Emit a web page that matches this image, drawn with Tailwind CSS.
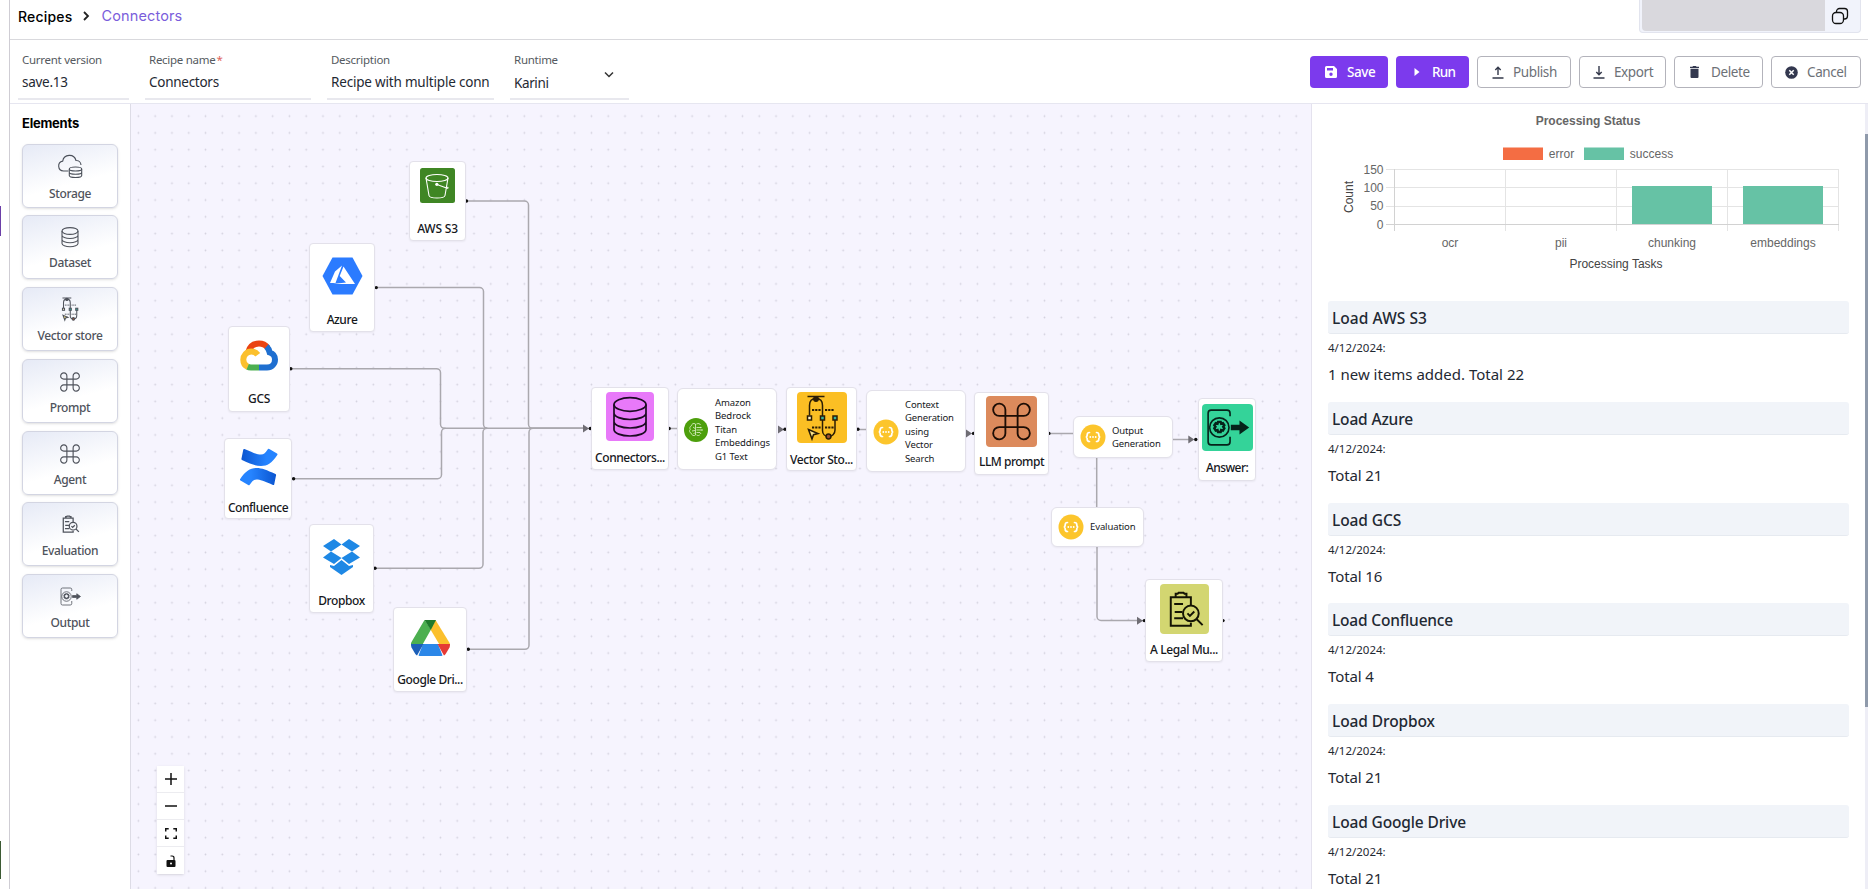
<!DOCTYPE html>
<html lang="en">
<head>
<meta charset="utf-8">
<title>Recipes - Connectors</title>
<script src="https://cdn.jsdelivr.net/npm/@tailwindcss/browser@4"></script>
</head>
<body class="h-[889px] w-[1868px] overflow-hidden bg-white font-['Noto_Sans','Open_Sans',sans-serif] text-[#1f2933]">

<!-- Shared icons -->
<svg class="hidden">
  <symbol id="i-db" viewBox="0 0 48 48" fill="none" stroke="currentColor">
    <ellipse cx="24" cy="12" rx="16" ry="6.800"/><path d="M8 12v25c0 3.700 7.200 6.500 16 6.500s16-2.800 16-6.500V12M8 20.500c0 3.700 7.200 6.500 16 6.500s16-2.800 16-6.500M8 29c0 3.700 7.200 6.500 16 6.500s16-2.800 16-6.500"/>
  </symbol>
  <symbol id="i-cmd" viewBox="0 0 50 50" fill="none" stroke="currentColor">
    <path d="M19 14v22a6 6 0 1 1-6-5.500h24a6 6 0 1 1-6 5.500V14a6 6 0 1 1 6 5.500H13A6 6 0 1 1 19 14z"/>
  </symbol>
  <symbol id="i-vec" viewBox="0 0 50 50" fill="none" stroke="currentColor">
    <path d="M10.500 4h17M12.500 23v-10c0-5 2.500-7 6.500-7s6.500 2.500 6.500 7v25c0 3.500 2.500 6 6 6s6.500-2.500 6.500-6.500V27"/>
    <path d="M15 17.500h9M28 17.500h9M15 35h9M28 35h9" stroke-dasharray="2.200 1" stroke-width="1.800"/>
    <circle cx="19" cy="6.500" r="2.200" fill="currentColor"/><circle cx="31.500" cy="44" r="2.400" fill="#a0522d"/>
    <rect x="10.500" y="23.500" width="4" height="4" fill="#fef3c7"/><rect x="23.500" y="23.500" width="4" height="4" fill="#34b3a0"/><rect x="36" y="23.500" width="4" height="4" fill="#34b3a0"/>
    <path d="M11.500 37l9.500 4-4.500 1.200-1.500 4.300z" fill="#fde68a"/>
  </symbol>
  <symbol id="i-eval" viewBox="0 0 50 50" fill="none" stroke="currentColor">
    <path d="M31.500 21v-8H11v29h20.500v-3M16 12.500V9.500h2l1-1h5l1 1h2v3M14.500 20h9M15 28h8M14.500 34.500h9"/>
    <circle cx="31.500" cy="29.500" r="8"/><path d="M28 29.500l2.500 2.500 4.500-4.500M37.500 35.500l6 6"/>
  </symbol>
  <symbol id="i-out" viewBox="0 0 50 46" fill="none" stroke="currentColor">
    <path d="M27.500 12V9a3 3 0 0 0-3-3H9a3 3 0 0 0-3 3v28a3 3 0 0 0 3 3h15.500a3 3 0 0 0 3-3v-5"/>
    <circle cx="17" cy="23" r="9.500"/>
    <path d="M15.700 17.500h2.600l.5 1.700 1.700-.5 1.400 2.100-1.100 1.500 1.100 1.500-1.400 2.200-1.700-.5-.5 1.900h-2.600l-.5-1.900-1.700.5-1.400-2.200 1.100-1.500-1.100-1.500 1.400-2.100 1.700.5z" stroke-width="2.400"/>
    <path d="M29 21h8.500v-3.500l7.500 5.500-7.500 5.500V25H29z" fill="currentColor" stroke-width="1.500"/>
  </symbol>
  <symbol id="i-fn" viewBox="0 0 26 26">
    <circle cx="13" cy="13" r="12.500" fill="#fcc52c"/>
    <g fill="none" stroke="#fff" stroke-width="1.700" stroke-linecap="round"><path d="M9.500 8.500c-2 0-2.300 1-2.300 2.300 0 1.200-.5 2.200-1.500 2.200 1 0 1.500 1 1.500 2.200 0 1.300.3 2.300 2.300 2.300M16.500 8.500c2 0 2.300 1 2.300 2.300 0 1.200.5 2.200 1.500 2.200-1 0-1.500 1-1.500 2.200 0 1.300-.3 2.300-2.300 2.300"/></g>
    <g fill="#fff"><circle cx="10.300" cy="13" r=".9"/><circle cx="13" cy="13" r=".9"/><circle cx="15.700" cy="13" r=".9"/></g>
  </symbol>
</svg>

<div class="flex h-full">
  <!-- Collapsed navigation edge -->
  <div class="flex w-[9px] shrink-0 flex-col">
    <div class="mt-[206px] h-[30px] w-px bg-[#6b3fa8]"></div>
    <div class="mt-[605px] h-[38px] w-px bg-[#3c5a34]"></div>
  </div>

  <div class="flex h-full grow flex-col border-l border-[#cfcdd4]">
    <!-- Breadcrumb -->
    <header class="flex h-10 shrink-0 items-start justify-between border-b border-[#d9d9dd] pl-2 pr-[7px]">
      <nav class="flex h-8 items-center font-['Inter',sans-serif] text-[14.500px]">
        <span class="text-[14px] font-medium tracking-[0.190px] text-black">Recipes</span>
        <svg class="ml-[10px] h-3 w-2" viewBox="0 0 8 12" fill="none" stroke="#222" stroke-width="1.800"><path d="M2 2l4 4-4 4"/></svg>
        <span class="ml-[11px] tracking-[0.130px] text-[#7a5ddb]">Connectors</span>
      </nav>
      <div class="flex h-[33px] w-[222px] rounded-b border border-t-0 border-[#e2e4ee] bg-[#f1f3fb] pb-px pl-[2px]">
        <div class="w-[183px] rounded-bl bg-[#d9d8dd]"></div>
        <svg class="ml-[6px] mt-[7px] h-[18px] w-[18px]" viewBox="0 0 18 18" fill="none" stroke="#111" stroke-width="1.300"><rect x="1.500" y="5.500" width="11" height="11" rx="3.500"/><path d="M5.500 5V4.500a3 3 0 0 1 3-3h5a3 3 0 0 1 3 3v4.500a3 3 0 0 1-3 3h-.5"/></svg>
      </div>
    </header>

    <!-- Recipe toolbar -->
    <div class="flex h-16 shrink-0 justify-between border-b border-[#e6e6f0] pl-2 pr-[7px]">
      <div class="flex gap-4 pt-[11px] text-[13.500px] tracking-[-0.270px]">
        <label class="flex h-[49px] w-[111px] flex-col border-b-2 border-[#e8e8ee] pl-1"><span class="h-[18px] text-[11.500px] leading-[18px] text-[#555a60]">Current version</span><span class="mt-[3px] leading-[20px]">save.13</span></label>
        <label class="flex h-[49px] w-[166px] flex-col border-b-2 border-[#e8e8ee] pl-1"><span class="h-[18px] text-[11.500px] leading-[18px] text-[#555a60]">Recipe name<span class="ml-px text-[#e0645c]">*</span></span><span class="mt-[3px] leading-[20px]">Connectors</span></label>
        <label class="flex h-[49px] w-[167px] flex-col border-b-2 border-[#e8e8ee] pl-1"><span class="h-[18px] text-[11.500px] leading-[18px] text-[#555a60]">Description</span><span class="mt-[3px] whitespace-nowrap leading-[20px] tracking-[-0.190px]">Recipe with multiple conn</span></label>
        <label class="flex h-[49px] w-[119px] border-b-2 border-[#e8e8ee] pl-1"><span class="flex grow flex-col"><span class="h-[18px] text-[11.500px] leading-[18px] text-[#555a60]">Runtime</span><span class="mt-1 leading-[20px] tracking-[-0.390px]">Karini</span></span>
          <svg class="mr-[15px] mt-[20px] h-2 w-[10px]" viewBox="0 0 10 8" fill="none" stroke="#333" stroke-width="1.500"><path d="M1 1.500l4 4 4-4"/></svg></label>
      </div>
      <div class="flex gap-2 pt-4 text-[13.500px] tracking-[-0.390px] text-[#6d7177]">
        <button class="flex h-8 w-[78px] items-center rounded bg-[#7c3aed] pl-[15px] font-medium text-white"><svg class="mr-[10px] h-3 w-3" viewBox="0 0 12 12"><path fill="#fff" fill-rule="evenodd" d="M1.500 0H9l3 3v7.500a1.500 1.500 0 0 1-1.500 1.500h-9A1.500 1.500 0 0 1 0 10.500v-9A1.500 1.500 0 0 1 1.500 0zM2 2v2.500h6V2zM6 6.500a1.700 1.700 0 1 0 0 3.400 1.700 1.700 0 0 0 0-3.400z"/></svg>Save</button>
        <button class="flex h-8 w-[73px] items-center rounded bg-[#7c3aed] pl-[17px] font-medium tracking-[-0.700px] text-white"><svg class="mr-[11px] h-[10px] w-2" viewBox="0 0 8 10" fill="#fff"><path d="M1.500 1l5 4-5 4z"/></svg>Run</button>
        <button class="flex h-8 w-[94px] items-center rounded border border-[#b3b3bb] pl-[14px]"><svg class="mr-[9px] h-[13px] w-3" viewBox="0 0 12 13" fill="none" stroke="#33384a" stroke-width="1.400"><path d="M.5 12h11M6 9V1.500M3.300 4L6 1.300 8.700 4"/></svg>Publish</button>
        <button class="flex h-8 w-[87px] items-center rounded border border-[#b3b3bb] pl-[13px]"><svg class="mr-[9px] h-[13px] w-3" viewBox="0 0 12 13" fill="none" stroke="#33384a" stroke-width="1.400"><path d="M.5 12h11M6 0v8.500M3.300 6L6 8.700 8.700 6"/></svg>Export</button>
        <button class="flex h-8 w-[89px] items-center rounded border border-[#b3b3bb] pl-[14px]"><svg class="mr-[11px] h-3 w-[11px]" viewBox="0 0 11 12" fill="#33384f"><path d="M1 .7h2.500L4 0h3l.5.700H10V2H1zM1.500 2.700h8V11a1 1 0 0 1-1 1h-6a1 1 0 0 1-1-1z"/></svg>Delete</button>
        <button class="flex h-8 w-[90px] items-center rounded border border-[#b3b3bb] pl-[13px]"><svg class="mr-[9px] h-[13px] w-[13px]" viewBox="0 0 13 13"><circle cx="6.500" cy="6.500" r="6.300" fill="#33384f"/><path d="M4.300 4.300l4.400 4.400M8.700 4.300L4.300 8.700" stroke="#fff" stroke-width="1.500"/></svg>Cancel</button>
      </div>
    </div>

    <div class="flex min-h-0 grow">
      <!-- Elements palette -->
      <aside class="flex w-[121px] shrink-0 flex-col border-r border-[#dddce6] pl-3 text-[12px] font-medium tracking-[-0.380px] text-[#4f535c]">
        <h2 class="mt-[9px] h-[30.500px] font-['Inter',sans-serif] text-[13px] font-bold leading-5 tracking-[-0.230px] text-black">Elements</h2>
        <div class="flex w-24 flex-col gap-[7.800px]">
          <div class="flex h-16 flex-col items-center rounded-md border border-[#d3d5e2] bg-linear-165 from-[#e6eaf6] to-white to-60% pt-2 shadow"><svg class="h-7 w-7" viewBox="0 0 28 28" fill="none" stroke="#4b505a" stroke-width="1.100"><path d="M12.500 18H7.500a5 5 0 0 1-.800-9.900A6.800 6.800 0 0 1 20 7.500a4.800 4.800 0 0 1 5 4.500"/><ellipse cx="19.500" cy="16" rx="6.200" ry="2"/><path d="M13.300 16v6.500c0 1.200 2.800 2 6.200 2s6.200-.800 6.200-2V16M13.300 19.200c0 1.200 2.800 2 6.200 2s6.200-.800 6.200-2"/></svg><span class="mt-[3px] leading-5">Storage</span></div>
          <div class="flex h-16 flex-col items-center rounded-md border border-[#d3d5e2] bg-linear-165 from-[#e6eaf6] to-white to-60% pt-[9px] shadow"><svg class="h-6 w-6" stroke-width="2.200"><use href="#i-db"/></svg><span class="mt-1 leading-5">Dataset</span></div>
          <div class="flex h-16 flex-col items-center rounded-md border border-[#d3d5e2] bg-linear-165 from-[#e6eaf6] to-white to-60% pt-2 shadow"><svg class="h-[26px] w-[26px]" stroke-width="2"><use href="#i-vec"/></svg><span class="mt-1 leading-5">Vector store</span></div>
          <div class="flex h-16 flex-col items-center rounded-md border border-[#d3d5e2] bg-linear-165 from-[#e6eaf6] to-white to-60% pt-[9px] shadow"><svg class="h-[26px] w-[26px]" stroke-width="2.200"><use href="#i-cmd"/></svg><span class="mt-[3px] leading-5">Prompt</span></div>
          <div class="flex h-16 flex-col items-center rounded-md border border-[#d3d5e2] bg-linear-165 from-[#e6eaf6] to-white to-60% pt-[9px] shadow"><svg class="h-[26px] w-[26px]" stroke-width="2.200"><use href="#i-cmd"/></svg><span class="mt-[3px] leading-5">Agent</span></div>
          <div class="flex h-16 flex-col items-center rounded-md border border-[#d3d5e2] bg-linear-165 from-[#e6eaf6] to-white to-60% pt-[9px] shadow"><svg class="h-6 w-6" stroke-width="2.600"><use href="#i-eval"/></svg><span class="mt-[5px] leading-5">Evaluation</span></div>
          <div class="flex h-16 flex-col items-center rounded-md border border-[#d3d5e2] bg-linear-165 from-[#e6eaf6] to-white to-60% pt-[9px] shadow"><svg class="h-[25px] w-[25px]" stroke-width="1.600"><use href="#i-out"/></svg><span class="mt-1 leading-5">Output</span></div>
        </div>
      </aside>

      <!-- Flow canvas: layer origin is the page's top-left corner -->
      <main class="relative w-[1180px] shrink-0 overflow-hidden bg-[#f6f4fe] text-[12px] font-medium tracking-[-0.420px] whitespace-nowrap text-[#16181c]">
        <div class="absolute -left-[131px] -top-[104px] h-[889px] w-[1868px]">
          <svg class="absolute inset-0" width="1868" height="889">
            <defs><pattern id="dots" width="16.780" height="16.780" patternUnits="userSpaceOnUse" x="146.800" y="141.300"><circle cx="8.390" cy="8.390" r=".9" fill="#d3d1de"/></pattern></defs>
            <rect width="1868" height="889" fill="url(#dots)"/>
            <g fill="none" stroke="#aaa8ae" stroke-width="1.500">
              <path d="M468 201H524.500a4 4 0 0 1 4 4V424.300a4 4 0 0 0 4 4H583"/>
              <path d="M378 287.500H479.500a4 4 0 0 1 4 4V424.300a4 4 0 0 0 4 4"/>
              <path d="M292 368.700H436.500a4 4 0 0 1 4 4V424.300a4 4 0 0 0 4 4H583"/>
              <path d="M295 478.700H437.500a4 4 0 0 0 4-4V432.300a4 4 0 0 1 4-4"/>
              <path d="M376 568.300H479a4 4 0 0 0 4-4V432.300a4 4 0 0 1 4-4"/>
              <path d="M470 649.300H525a4 4 0 0 0 4-4V432.300a4 4 0 0 1 4-4H583"/>
              <path d="M671 428.500h8M860 429.500h8M1051 433.500h23M1172 439.500h17M1096.700 456v52M1097 545v71.500a4 4 0 0 0 4 4h37"/>
            </g>
            <g fill="#6f6d74"><path d="M583 424.500v8l6-4zM778 425.500v8l6-4zM966 429.500v8l6-4zM1188.300 435.500v8l6-4zM1137 616.700v8l6-4z"/></g>
            <g fill="#111"><circle cx="466.500" cy="201" r="1.700"/><circle cx="376.300" cy="287.600" r="1.700"/><circle cx="290.800" cy="368.700" r="1.700"/><circle cx="293.600" cy="478.700" r="1.700"/><circle cx="375" cy="568.300" r="1.700"/><circle cx="468.300" cy="649.300" r="1.700"/><circle cx="590.300" cy="428.500" r="1.700"/><circle cx="669.200" cy="428.500" r="1.700"/><circle cx="785" cy="429.300" r="1.700"/><circle cx="858" cy="429.300" r="1.700"/><circle cx="973.500" cy="433.400" r="1.700"/><circle cx="1049" cy="433.400" r="1.700"/><circle cx="1195.800" cy="439.500" r="1.700"/><circle cx="1144.300" cy="620.600" r="1.700"/><circle cx="1223" cy="620.600" r="1.700"/></g>
          </svg>

          <div class="absolute left-[409px] top-[161px] flex h-20 w-[57px] flex-col items-center rounded border border-[#e3e1ea] bg-white pt-[6px] shadow-xs">
            <svg class="h-[35px] w-[35px] shrink-0" viewBox="0 0 35 35"><rect width="35" height="35" rx="2.500" fill="#3f8624"/><g fill="none" stroke="#fff" stroke-width="1.100"><ellipse cx="17" cy="10" rx="11" ry="3.500"/><path d="M6 10l3 17.500c.3 1.400 3.500 2.500 8 2.500s7.700-1.100 8-2.500L28 10M17 16.500l9.500 3.500c1.500.3 2 0 1-1"/></g><circle cx="16.800" cy="16.300" r="1.600" fill="#fff"/></svg>
            <span class="mt-[17px] leading-[18px] tracking-[-0.200px]">AWS S3</span></div>

          <div class="absolute left-[309px] top-[243px] flex h-[89px] w-[66px] flex-col items-center rounded border border-[#e3e1ea] bg-white pt-[13px] shadow-xs">
            <svg class="h-[38px] w-[41px] shrink-0" viewBox="0 0 41 38"><path d="M10.500.5h20L40.500 19l-10 18.500h-20L.5 19z" fill="#2b7bff"/><path d="M20 8.500L13 14.500 8 26h5.500zM21.500 9.500L17.700 19l6.300 6.500-13 1.500H33z" fill="#fff"/></svg>
            <span class="mt-4 leading-[18px]">Azure</span></div>

          <div class="absolute left-[228px] top-[326px] flex h-[86px] w-[62px] flex-col items-center rounded border border-[#e3e1ea] bg-white pt-[13px] shadow-xs">
            <svg class="h-[31px] w-[38px] shrink-0" viewBox="0 0 38 31" fill="none" stroke-width="6"><path d="M8.500 11.500C10 6.500 14 3.500 19 3.500c3.500 0 6.500 1.300 8.500 4" stroke="#ea4312"/><path d="M26.500 6.500c1.800 1.700 2.700 3.700 3.200 6 3.200 1 5.300 3.500 5.300 7 0 4.500-3.300 8-8 8h-8" stroke="#1f6fd0"/><path d="M19 27.500h-8c-1.500 0-2.800-.400-4-1.100" stroke="#4caf50"/><path d="M7.700 26.800C5 25.700 3.300 23 3.300 19.800c0-4.500 3.300-8.300 8-8.300 3 0 5 1.200 6.500 3.200" stroke="#fbc02d"/></svg>
            <span class="mt-[19px] leading-[18px] tracking-[-0.350px]">GCS</span></div>

          <div class="absolute left-[224px] top-[438px] flex h-[81px] w-[68px] flex-col items-center rounded border border-[#e3e1ea] bg-white pt-[9px] shadow-xs">
            <svg class="h-[38px] w-[39px] shrink-0" viewBox="0 0 39 38"><defs><linearGradient id="cf1" x1="0" x2="1"><stop offset="0" stop-color="#0b55d0"/><stop offset=".7" stop-color="#2684ff"/></linearGradient><linearGradient id="cf2" x1="1" x2="0"><stop offset="0" stop-color="#0b55d0"/><stop offset=".7" stop-color="#2684ff"/></linearGradient></defs><path d="M5.500 1c9 4 13 5.500 16.500 5.500 3 0 4.500-2 6.800-5.300.4-.6.900-.7 1.500-.3L38 5.500c.6.400.7.900.3 1.500C33 15 28.500 18 22 18c-5.500 0-10-2-19-6-.6-.3-.8-.8-.5-1.500L4.300 1.500C4.500 1 4.900.8 5.500 1z" fill="url(#cf1)"/><path d="M34 37c-9-4-13-5.500-16.500-5.500-3 0-4.500 2-6.800 5.300-.4.600-.9.700-1.500.3L1.500 32.500c-.6-.400-.7-.900-.3-1.500C6.500 23 11 20 17.500 20c5.500 0 10 2 19 6 .6.300.8.800.5 1.500l-1.800 9c-.2.500-.6.700-1.200.5z" fill="url(#cf2)"/></svg>
            <span class="mt-[13px] leading-[18px] tracking-[-0.460px]">Confluence</span></div>

          <div class="absolute left-[309px] top-[524px] flex h-[89px] w-[65px] flex-col items-center rounded border border-[#e3e1ea] bg-white pt-[14px] shadow-xs">
            <svg class="h-9 w-[37px] shrink-0" viewBox="0 0 37 36" fill="#1e88e5"><path d="M11 0l7.500 5.500L8 12.500 0 7zM26 0l11 7-8 5.500L18.500 5.500zM0 18.500l8-6 10.500 6.500-7.500 6zM29 12.500l8 6-11 6.500-7.500-6zM7 26l4 1 7.500-6 7.500 6 4-1v2l-11.500 8L7 28z"/></svg>
            <span class="mt-[17px] leading-[18px]">Dropbox</span></div>

          <div class="absolute left-[393px] top-[607px] flex h-[85px] w-[74px] flex-col items-center rounded border border-[#e3e1ea] bg-white pt-3 shadow-xs">
            <svg class="h-9 w-[39px] shrink-0" viewBox="0 0 39 36"><path d="M13.500 0L.5 22c-.8 1.300-.6 2.200 0 3.500h10.500L20 9.500z" fill="#4caf50"/><path d="M24.500 0l13.800 22.500c.7 1.200.7 2 .2 3H29L19.500 9.500z" fill="#fbc02d"/><path d="M13.500 0h11.500l-5.200 10z" fill="#1f7a2c"/><path d="M12 24h15l4.500 11.500c-.7.400-1.300.5-2 .5h-20c-.7 0-1.300-.1-2-.5z" fill="#2b87e8"/><path d="M0 24h12.500L6 35.500c-.8-.4-1.300-.9-1.800-1.700L.5 27.500c-.4-.8-.5-2-.5-3.500z" fill="#1c5fb8"/><path d="M26.500 24H39c0 1.500-.1 2.700-.5 3.500l-3.700 6.300c-.5.800-1 1.300-1.800 1.700z" fill="#e53935"/><path d="M19.500 13.500L13 24h13z" fill="#fff"/></svg>
            <span class="mt-[15px] leading-[18px]">Google Dri...</span></div>

          <div class="absolute left-[591px] top-[387px] flex h-[83px] w-[78px] flex-col items-center rounded border border-[#e3e1ea] bg-white pt-1 shadow-xs">
            <div class="h-[49px] w-12 rounded bg-[#e879f9] text-[#1b0b22]"><svg class="h-[49px] w-12" stroke-width="1.700"><use href="#i-db"/></svg></div>
            <span class="mt-[8px] leading-[18px]">Connectors...</span></div>

          <div class="absolute left-[677px] top-[388px] flex h-[82px] w-[100px] items-center rounded-md border border-[#e3e1ea] bg-white pl-[6px] pt-px text-[9.500px] font-normal leading-[13.600px] tracking-[-0.080px] shadow-xs">
            <svg class="mr-[7px] h-6 w-6 shrink-0" viewBox="0 0 24 24"><circle cx="12" cy="12" r="12" fill="#4d9f0c"/><g fill="none" stroke="#e4f5d0" stroke-width=".8"><path d="M11.500 6c-2-1.300-4 0-4 1.700-1.800.6-2 2.600-1.200 3.600-1.300 1.200-.8 3.500 1 4 .2 2 2.700 3 4.200 1.700zM12.500 6c2-1 3.500-.300 4 1M12.500 9.500h3.500M12.500 12h5M12.500 14.500h3.500l1 1.500M12.500 17c1.300.8 2.700.7 3.300-.2M9 9l2 1.500M8 13l3-.5M9.500 16l1.500-1.500"/></g><g fill="#e4f5d0"><circle cx="16.800" cy="9.500" r=".8"/><circle cx="18" cy="12" r=".8"/></g></svg>
            <div class="flex flex-col"><span>Amazon</span><span>Bedrock</span><span>Titan</span><span>Embeddings</span><span>G1 Text</span></div></div>

          <div class="absolute left-[786px] top-[387px] flex h-[84px] w-[71px] flex-col items-center rounded border border-[#e3e1ea] bg-white pt-1 shadow-xs">
            <div class="h-[51px] w-[50px] shrink-0 rounded bg-[#fbbf24] text-[#2a1d05]"><svg class="h-[51px] w-[50px]" stroke-width="1.500"><use href="#i-vec"/></svg></div>
            <span class="mt-[8px] leading-[18px]">Vector Sto...</span></div>

          <div class="absolute left-[866px] top-[390px] flex h-[82px] w-[100px] items-center rounded-md border border-[#e3e1ea] bg-white pl-[6px] pt-px text-[9.500px] font-normal leading-[13.600px] tracking-[-0.120px] shadow-xs">
            <svg class="mr-[6px] h-[26px] w-[26px] shrink-0"><use href="#i-fn"/></svg>
            <div class="flex flex-col"><span>Context</span><span>Generation</span><span>using</span><span>Vector</span><span>Search</span></div></div>

          <div class="absolute left-[974px] top-[392px] flex h-[83px] w-[75px] flex-col items-center rounded border border-[#e3e1ea] bg-white pt-[3px] shadow-xs">
            <div class="h-[51px] w-[51px] rounded bg-[#dc8a5c] text-[#1d0d05]"><svg class="h-[51px] w-[51px]" stroke-width="1.800"><use href="#i-cmd"/></svg></div>
            <span class="mt-[6px] leading-[18px] tracking-[-0.500px]">LLM prompt</span></div>

          <div class="absolute left-[1073px] top-[416px] flex h-[42px] w-[100px] items-center rounded-md border border-[#e3e1ea] bg-white pl-[6px] text-[9.500px] font-normal leading-[13.400px] tracking-[-0.140px] shadow-xs">
            <svg class="mr-[6px] h-[26px] w-[26px] shrink-0"><use href="#i-fn"/></svg>
            <div class="flex flex-col"><span>Output</span><span>Generation</span></div></div>

          <div class="absolute left-[1198px] top-[398px] flex h-[83px] w-[58px] flex-col items-center rounded border border-[#e3e1ea] bg-white pt-[5px] shadow-xs">
            <div class="h-[47px] w-[51px] rounded bg-[#34d399] text-[#06231a]"><svg class="h-[47px] w-[51px]" stroke-width="1.600"><use href="#i-out"/></svg></div>
            <span class="mt-2 leading-[18px] tracking-[-0.560px]">Answer:</span></div>

          <div class="absolute left-[1051px] top-[507px] flex h-10 w-[93px] items-center rounded-md border border-[#e3e1ea] bg-white pl-[6px] text-[9.500px] font-normal leading-[13.400px] tracking-[-0.110px] shadow-xs">
            <svg class="mr-[6px] h-[26px] w-[26px] shrink-0"><use href="#i-fn"/></svg>
            <span>Evaluation</span></div>

          <div class="absolute left-[1145px] top-[579px] flex h-[83px] w-[78px] flex-col items-center rounded border border-[#e3e1ea] bg-white pt-1 shadow-xs">
            <div class="h-[50px] w-[49px] shrink-0 rounded bg-[#d3d671] text-[#141404]"><svg class="h-[50px] w-[49px]" stroke-width="2"><use href="#i-eval"/></svg></div>
            <span class="mt-[7px] leading-[18px]">A Legal Mu...</span></div>

          <!-- Zoom controls -->
          <div class="absolute left-[157px] top-[766px] flex w-[27px] flex-col divide-y divide-[#ececf0] bg-white shadow-sm">
            <button class="flex h-[27px] items-center justify-center"><svg class="h-3 w-3" viewBox="0 0 12 12" stroke="#111" stroke-width="1.500"><path d="M0 6h12M6 0v12"/></svg></button>
            <button class="flex h-[27px] items-center justify-center"><svg class="h-3 w-3" viewBox="0 0 12 12" stroke="#111" stroke-width="1.500"><path d="M0 6h12"/></svg></button>
            <button class="flex h-[27px] items-center justify-center"><svg class="h-[11px] w-3" viewBox="0 0 12 11" fill="none" stroke="#111" stroke-width="1.500"><path d="M.7 3.500V.7h3M8.300.7h3v2.800M11.300 7.500v2.800h-3M3.700 10.300h-3V7.500"/></svg></button>
            <button class="flex h-[27px] items-center justify-center"><svg class="h-3 w-[10px]" viewBox="0 0 10 12"><rect x=".5" y="5" width="9" height="7" rx="1" fill="#111"/><path d="M4.500 1h1.700a1.800 1.800 0 0 1 1.800 1.800V5" fill="none" stroke="#111" stroke-width="1.200"/><circle cx="5" cy="8.500" r="1" fill="#fff"/></svg></button>
          </div>
        </div>
      </main>

      <!-- Run results -->
      <section class="flex min-w-0 grow border-l border-[#e4e2ee]">
        <div class="w-[553px] shrink-0 overflow-hidden pl-4">
          <svg class="block h-[197px] w-[537px]" viewBox="1328 104 537 197" font-family="Liberation Sans, Arial, sans-serif" font-size="12" fill="#666" text-anchor="middle">
            <text x="1588" y="124.800" font-weight="bold">Processing Status</text>
            <rect x="1503" y="147.500" width="40" height="12.500" fill="#f46d43"/><text x="1561.500" y="157.500">error</text>
            <rect x="1584" y="147.500" width="40" height="12.500" fill="#66c2a5"/><text x="1651.500" y="157.500">success</text>
            <path d="M1386 169.500h453M1386 187.500h453M1386 206.500h453M1394.500 169v62M1505.500 169v62M1616.500 169v62M1727.500 169v62M1838.500 169v62" stroke="#e4e4e4" fill="none"/>
            <path d="M1386 224.500h453M1394.500 169v62" stroke="#d2d2d2" fill="none"/>
            <path d="M1632 186h80v38h-80zM1743 186h80v38h-80z" fill="#66c2a5"/>
            <g text-anchor="end"><text x="1383.500" y="173.500">150</text><text x="1383.500" y="191.500">100</text><text x="1383.500" y="210">50</text><text x="1383.500" y="228.500">0</text></g>
            <text x="1450" y="246.500">ocr</text><text x="1561" y="246.500">pii</text><text x="1672" y="246.500">chunking</text><text x="1783" y="246.500">embeddings</text>
            <text x="1616" y="267.500" fill="#444">Processing Tasks</text>
            <text transform="translate(1353 197) rotate(-90)" fill="#444">Count</text>
          </svg>
          <div class="flex w-[521px] flex-col gap-[10.800px] text-[15px] tracking-[-0.100px]">
            <div class="h-[90px]"><h3 class="h-[33px] rounded-[3px] border-b border-[#e6eaf0] bg-[#f1f4f9] pl-[4px] text-[15.500px] font-medium leading-[34px] tracking-[0.060px]">Load AWS S3</h3><p class="pt-1 text-[11.500px] leading-5 tracking-normal">4/12/2024:</p><p class="pt-1 leading-6 tracking-normal">1 new items added. Total 22</p></div>
            <div class="h-[90px]"><h3 class="h-[33px] rounded-[3px] border-b border-[#e6eaf0] bg-[#f1f4f9] pl-[4px] text-[15.500px] font-medium leading-[34px] tracking-[-0.170px]">Load Azure</h3><p class="pt-1 text-[11.500px] leading-5 tracking-normal">4/12/2024:</p><p class="pt-1 leading-6">Total 21</p></div>
            <div class="h-[90px]"><h3 class="h-[33px] rounded-[3px] border-b border-[#e6eaf0] bg-[#f1f4f9] pl-[4px] text-[15.500px] font-medium leading-[34px]">Load GCS</h3><p class="pt-1 text-[11.500px] leading-5 tracking-normal">4/12/2024:</p><p class="pt-1 leading-6">Total 16</p></div>
            <div class="h-[90px]"><h3 class="h-[33px] rounded-[3px] border-b border-[#e6eaf0] bg-[#f1f4f9] pl-[4px] text-[15.500px] font-medium leading-[34px] tracking-[-0.190px]">Load Confluence</h3><p class="pt-1 text-[11.500px] leading-5 tracking-normal">4/12/2024:</p><p class="pt-1 leading-6">Total 4</p></div>
            <div class="h-[90px]"><h3 class="h-[33px] rounded-[3px] border-b border-[#e6eaf0] bg-[#f1f4f9] pl-[4px] text-[15.500px] font-medium leading-[34px]">Load Dropbox</h3><p class="pt-1 text-[11.500px] leading-5 tracking-normal">4/12/2024:</p><p class="pt-1 leading-6">Total 21</p></div>
            <div class="h-[90px]"><h3 class="h-[33px] rounded-[3px] border-b border-[#e6eaf0] bg-[#f1f4f9] pl-[4px] text-[15.500px] font-medium leading-[34px] tracking-[-0.140px]">Load Google Drive</h3><p class="pt-1 text-[11.500px] leading-5 tracking-normal">4/12/2024:</p><p class="pt-1 leading-6">Total 21</p></div>
          </div>
        </div>
        <div class="w-[3px] shrink-0 bg-[#eeeef6] pt-[30px]"><div class="h-[573px] bg-[#8f9aab]"></div></div>
      </section>
    </div>
  </div>
</div>
</body>
</html>
